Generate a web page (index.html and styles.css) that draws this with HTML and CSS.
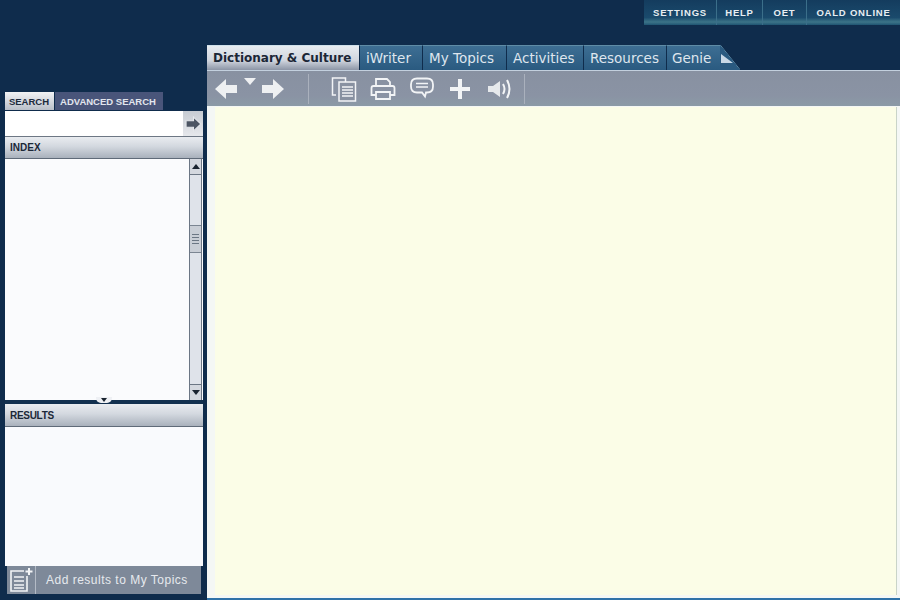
FILE: index.html
```html
<!DOCTYPE html>
<html lang="en">
  <head>
    <meta charset="UTF-8" />
    <title>OALD</title>
    <link rel="stylesheet" href="styles.css">
  </head>
  <body>
    <div class="topbar">
      <nav class="toplinks">
        <a class="s1">SETTINGS</a>
        <a class="s2">HELP</a>
        <a class="s3">OET</a>
        <a class="s4">OALD ONLINE</a>
      </nav>
    </div>
    <div class="app">
      <aside class="side">
        <div class="search-tabs">
          <span class="stab stab-on">SEARCH</span>
          <span class="stab stab-off">ADVANCED SEARCH</span>
        </div>
        <div class="search-row">
          <div class="gobtn">
            <svg width="17" height="16" viewBox="0 0 16 15"><path d="M1 4.500h7V1l7 6.500L8 14v-3.500H1z" fill="#4c5563" stroke="#e4e7eb"/></svg>
          </div>
        </div>
        <div class="head">INDEX</div>
        <div class="index">
          <div class="scroll">
            <div class="sbtn"><i class="up"></i></div>
            <div class="track">
              <div class="thumb"><b></b><b></b><b></b><b></b></div>
            </div>
            <div class="sbtn sbtn-down"><i class="down"></i></div>
          </div>
        </div>
        <div class="split"><span class="grip"><i></i></span></div>
        <div class="head head-res">RESULTS</div>
        <div class="results"></div>
        <div class="addbar">
          <div class="addicon">
            <svg width="26" height="26" viewBox="0 0 26 26" fill="none" stroke="#f2f4f6" stroke-width="1.6"><path d="M16 4H3v20h16V9"/><path d="M6 10h10M6 14h10M6 18h10M6 21h10"/><path d="M21 1v7M17.500 4.500h7" stroke-width="2"/></svg>
          </div>
          <span class="addtext">Add results to My Topics</span>
        </div>
      </aside>
      <main class="main">
        <div class="tabs">
          <span class="tab tab-on">Dictionary &amp; Culture</span>
          <span class="tab t-iw">iWriter</span>
          <span class="tab t-mt">My Topics</span>
          <span class="tab t-ac">Activities</span>
          <span class="tab t-re">Resources</span>
          <span class="tab t-ge">Genie</span>
          <span class="fold"><i></i></span>
        </div>
        <div class="toolbar">
          <div class="tools-nav">
            <svg width="24" height="22" viewBox="0 0 24 22"><path d="M1 11 12 1v6h11v8H12v6z" fill="#eef0f2"/></svg>
            <svg class="drop" width="12" height="8" viewBox="0 0 12 8"><path d="M0 0h12L6 7z" fill="#eef0f2"/></svg>
            <svg width="24" height="22" viewBox="0 0 24 22"><path d="M23 11 12 1v6H1v8h11v6z" fill="#eef0f2"/></svg>
          </div>
          <div class="tools-main">
            <svg width="26" height="26" viewBox="0 0 26 26" fill="none" stroke="#f2f4f6" stroke-width="1.500"><path d="M5 19H1.500V2h13v4"/><path d="M8 6h16.500v19H8z" fill="#8891a1"/><path d="M11 11h11M11 14h11M11 17h11M11 20h11"/></svg>
            <svg class="printer" width="26" height="24" viewBox="0 0 26 24" fill="none" stroke="#f2f4f6" stroke-width="1.800"><path d="M6 9V2h11l3 3v4"/><path d="M6 18H1.500v-7q0-2 2-2h19q2 0 2 2v7H20"/><path d="M6 15h14v7H6z"/></svg>
            <svg width="24" height="23" viewBox="0 0 24 23" fill="none" stroke="#f2f4f6" stroke-width="1.800"><path d="M7 1.500h10q6 0 6 6v2q0 6-6 6h-1l-1 4-3-4H7q-6 0-6-6v-2q0-6 6-6z"/><path d="M6 6.500h12M6 10h12" stroke-width="1.300"/></svg>
            <svg class="plus" width="22" height="22" viewBox="0 0 22 22"><path d="M9 1h4v8h8v4h-8v8H9v-8H1V9h8z" fill="#f2f4f6"/></svg>
            <svg class="speaker" width="25" height="22" viewBox="0 0 25 22" fill="none"><path d="M1 8h5l7-5v16l-7-5H1z" fill="#e6e9ec"/><path d="M16 6q3 5 0 10M20 2q5 9 0 18" stroke="#f2f4f6" stroke-width="2"/></svg>
          </div>
        </div>
        <div class="page">
          <div class="sheet"></div>
        </div>
      </main>
    </div>
  </body>
</html>
```
FILE: styles.css
```css
html,
body {
  margin: 0;
  height: 600px;
  overflow: hidden;
}
body {
  width: 900px;
  background-color: #0f2c4c;
  font-family: "Liberation Sans", Arial, sans-serif;
  display: flex;
  flex-direction: column;
}
svg {
  display: block;
}

/* top links */
.topbar {
  height: 45px;
  display: flex;
  justify-content: flex-end;
  align-items: flex-start;
  flex: none;
}
.toplinks {
  width: 256px;
  height: 25px;
  display: flex;
  background: linear-gradient(#143c5e, #1a4a6c 70%, #3c7488 88%, #1f5472);
}
.toplinks a {
  height: 25px;
  line-height: 25px;
  color: #e8eef2;
  font-size: 9.500px;
  font-weight: bold;
  letter-spacing: 0.8px;
  text-align: center;
  border-right: 1px solid #3b6f8a;
  box-sizing: border-box;
  white-space: nowrap;
}
.toplinks .s1 { width: 73px; }
.toplinks .s2 { width: 46px; }
.toplinks .s3 { width: 44px; }
.toplinks .s4 { width: 93px; border-right: none; }

.app {
  display: flex;
  flex: 1;
  min-height: 0;
}

/* left column */
.side {
  width: 198px;
  margin: 47px 1px 6px 5px;
  display: flex;
  flex-direction: column;
  flex: none;
}
.search-tabs {
  height: 18px;
  display: flex;
  align-items: stretch;
  flex: none;
}
.stab {
  font-size: 9.500px;
  font-weight: bold;
  line-height: 19px;
  text-align: center;
  white-space: nowrap;
}
.stab-on {
  width: 48px;
  padding-right: 1px;
  background: linear-gradient(#f2f3f5, #b9bfc9);
  color: #1c2a3c;
}
.stab-off {
  width: 108px;
  margin-left: 1px;
  padding-right: 2px;
  box-sizing: border-box;
  background: #49557a;
  color: #e3e6ee;
}
.search-row {
  height: 25px;
  margin-top: 1px;
  background: #fff;
  border-bottom: 1px solid #6d7784;
  display: flex;
  justify-content: flex-end;
  flex: none;
}
.gobtn {
  width: 20px;
  background: linear-gradient(#c6cbd2, #e6e8ec);
  display: flex;
  align-items: center;
  justify-content: center;
}
.head {
  height: 21px;
  line-height: 21px;
  padding-left: 5px;
  font-size: 10px;
  font-weight: bold;
  color: #1b2838;
  background: linear-gradient(#e9ecf0, #d3d8df 45%, #a9b1bc);
  border-bottom: 1px solid #5f6a78;
  flex: none;
}
.index {
  height: 241px;
  background: #fafbfd;
  display: flex;
  justify-content: flex-end;
  flex: none;
}
.scroll {
  width: 13px;
  margin-right: 1px;
  display: flex;
  flex-direction: column;
  background: #dfe3ea;
  border: 1px solid #6b7684;
  border-width: 0 1px;
  box-sizing: border-box;
}
.sbtn {
  height: 15px;
  background: #d4d8df;
  border-bottom: 1px solid #6b7684;
  display: flex;
  align-items: center;
  justify-content: center;
  flex: none;
}
.sbtn-down {
  border-bottom: none;
  border-top: 1px solid #6b7684;
}
.up,
.down {
  width: 0;
  height: 0;
  border-left: 4px solid transparent;
  border-right: 4px solid transparent;
}
.up {
  border-bottom: 5px solid #1a2430;
}
.down {
  border-top: 5px solid #1a2430;
}
.track {
  flex: 1;
  display: flex;
  flex-direction: column;
}
.thumb {
  margin-top: 50px;
  height: 26px;
  background: #c9ced6;
  border: 1px solid #7b8592;
  border-width: 1px 0;
  display: flex;
  flex-direction: column;
  justify-content: center;
  gap: 2px;
}
.thumb b {
  display: block;
  height: 1px;
  margin: 0 2px;
  background: #6b7684;
}
.split {
  height: 4px;
  background: #12304f;
  position: relative;
  flex: none;
}
/* little handle that sits over the splitter */
.grip {
  position: absolute;
  left: 91px;
  top: -3px;
  width: 16px;
  height: 6px;
  background: #eef0f4;
  border-radius: 0 0 5px 5px;
  display: flex;
  justify-content: center;
  padding-top: 1px;
  box-sizing: border-box;
}
.grip i {
  width: 0;
  height: 0;
  border-left: 3px solid transparent;
  border-right: 3px solid transparent;
  border-top: 4px solid #1a2430;
}
.head-res {
  height: 22px;
  line-height: 23px;
  letter-spacing: -0.3px;
}
.results {
  flex: 1;
  background: #f9fafd;
}
.addbar {
  height: 28px;
  margin: 0 2px;
  background: #7e8999;
  display: flex;
  align-items: center;
  flex: none;
}
.addicon {
  width: 28px;
  height: 28px;
  border-right: 1px solid #b4bbc6;
  display: flex;
  align-items: center;
  justify-content: center;
  flex: none;
}
.addtext {
  margin-left: 10px;
  color: #e6e9ee;
  font-size: 12px;
  letter-spacing: 0.5px;
  white-space: nowrap;
}

/* right column */
.main {
  flex: 1;
  margin-left: 3px;
  display: flex;
  flex-direction: column;
  min-width: 0;
}
.tabs {
  height: 25px;
  display: flex;
  flex: none;
}
.tab {
  height: 25px;
  line-height: 24px;
  box-sizing: border-box;
  padding-left: 6px;
  color: #dfe6ee;
  font-family: "DejaVu Sans", sans-serif;
  font-size: 13.500px;
  background: linear-gradient(#3d6e93, #2a5a80);
  border-left: 1px solid #0f2c4c;
  border-top: 1px solid #5f8ca6;
  white-space: nowrap;
}
.tab-on {
  width: 152px;
  color: #1b2636;
  font-weight: bold;
  font-size: 12px;
  border-left: none;
  background: linear-gradient(#e6ebf0, #d0d5de 60%, #8c95a6);
  border-top: 1px solid #cfe0ea;
}
.t-iw { width: 63px; }
.t-mt { width: 84px; }
.t-ac { width: 77px; }
.t-re { width: 83px; }
.t-ge { width: 54px; padding-left: 5px; }
.fold {
  width: 20px;
  height: 25px;
  background: linear-gradient(to top right, #2a5a80 50%, #5f8ca6 50.500%, transparent 53%);
  display: flex;
  align-items: flex-end;
  padding-bottom: 7px;
  box-sizing: border-box;
}
.fold i {
  width: 0;
  height: 0;
  margin-left: 1px;
  border-right: 12px solid transparent;
  border-bottom: 9px solid #c8d8e6;
}
.toolbar {
  height: 36px;
  box-sizing: border-box;
  background: linear-gradient(#8891a1, #8a93a4 70%, #8b9aa6);
  border-top: 1px solid #c3d0de;
  display: flex;
  align-items: center;
  flex: none;
}
.tools-nav {
  width: 102px;
  height: 30px;
  padding-left: 7px;
  box-sizing: border-box;
  border-right: 1px solid #aab1bd;
  display: flex;
  align-items: center;
}
.drop {
  margin: -14px 5px 0 6px;
}
.tools-main {
  width: 216px;
  height: 30px;
  padding-left: 22px;
  box-sizing: border-box;
  border-right: 1px solid #aab1bd;
  display: flex;
  align-items: center;
  gap: 14px;
}
.printer {
  margin-left: -1px;
}
.plus {
  margin-left: 1px;
}
.speaker {
  margin-left: 2px;
}
.page {
  flex: 1;
  background: #f4f7f5;
  padding: 1px 3px 3px 8px;
  border-bottom: 2px solid #2f72a8;
  display: flex;
  min-height: 0;
}
.sheet {
  flex: 1;
  background: #fbfde7;
  border-right: 1px solid #c9d4c8;
}
```
